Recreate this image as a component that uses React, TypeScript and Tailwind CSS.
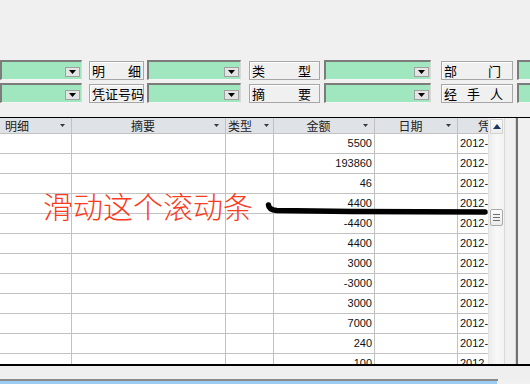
import React from "react";

const GREEN = "bg-[#a0e6bf]";

function DropBtn() {
  return (
    <div className="w-[15px] h-[10px] bg-[#e4e4e4] border border-[#a0a0a0] flex items-center justify-center">
      <svg width="7" height="4" viewBox="0 0 7 4">
        <polygon points="0,0 7,0 3.5,4" fill="#000" />
      </svg>
    </div>
  );
}

function Combo({ w, ml, btn = true }: { w: string; ml: string; btn?: boolean }) {
  return (
    <div
      className={`${w} ${ml} h-[20px] shrink-0 ${GREEN} border-t-2 border-l-2 border-t-[#7c7c7c] border-l-[#7c7c7c] border-r border-b border-r-[#d8d8d8] border-b-[#f4f4f4] flex items-end justify-end pr-[1px] pb-[2px]`}
    >
      {btn && <DropBtn />}
    </div>
  );
}

function Label({ chars, w, ml, gap }: { chars: string[]; w: string; ml: string; gap: string }) {
  return (
    <div
      className={`${w} ${ml} h-[19px] mt-[1px] shrink-0 border border-[#a6a6a6] shadow-[inset_1px_1px_0_#ffffff] flex items-center pl-[2px] ${gap} text-[13px] leading-none text-black font-['Noto_Sans_CJK_SC',sans-serif]`}
    >
      {chars.map((c, i) => (
        <span key={i}>{c}</span>
      ))}
    </div>
  );
}

function SortArrow() {
  return (
    <svg width="5" height="3" viewBox="0 0 5 3" className="shrink-0">
      <polygon points="0,0 5,0 2.5,3" fill="#3a3a3a" />
    </svg>
  );
}

const amounts = ["5500", "193860", "46", "4400", "-4400", "4400", "3000", "-3000", "3000", "7000", "240", "100"];

export default function App() {
  const cjk = "font-['Noto_Sans_CJK_SC',sans-serif]";
  const num = "font-['Liberation_Sans',sans-serif] text-[11px]";
  const cell = "h-[20px] border-r border-b border-[#c2c2c2] bg-white flex items-center overflow-hidden";
  const head = `h-[16px] border-r border-b border-[#c2c2c2] bg-[#dfe3e8] flex items-center text-[12px] leading-none text-[#222] ${cjk} overflow-hidden`;
  return (
    <div className="relative w-[530px] h-[384px] overflow-hidden bg-[#f0f0f0] flex flex-col">
      {/* controls */}
      <div className="pt-[60px] flex flex-col gap-[3px]">
        <div className="flex">
          <Combo w="w-[82px]" ml="ml-0" />
          <Label chars={["明", "细"]} w="w-[55px]" ml="ml-[7px]" gap="gap-[23px]" />
          <Combo w="w-[94px]" ml="ml-[3px]" />
          <Label chars={["类", "型"]} w="w-[71px]" ml="ml-[8px]" gap="gap-[33px]" />
          <Combo w="w-[107px]" ml="ml-[4px]" />
          <Label chars={["部", "门"]} w="w-[72px]" ml="ml-[10px]" gap="gap-[31px]" />
          <Combo w="w-[40px]" ml="ml-[4px]" btn={false} />
        </div>
        <div className="flex">
          <Combo w="w-[82px]" ml="ml-0" />
          <Label chars={["凭", "证", "号", "码"]} w="w-[55px]" ml="ml-[7px]" gap="gap-0" />
          <Combo w="w-[94px]" ml="ml-[3px]" />
          <Label chars={["摘", "要"]} w="w-[71px]" ml="ml-[8px]" gap="gap-[33px]" />
          <Combo w="w-[107px]" ml="ml-[4px]" />
          <Label chars={["经", "手", "人"]} w="w-[72px]" ml="ml-[10px]" gap="gap-[10px]" />
          <Combo w="w-[40px]" ml="ml-[4px]" btn={false} />
        </div>
      </div>

      {/* table area */}
      <div className="mt-[14px] border-t border-black flex h-[247px]">
        <div className="w-[488px] h-full overflow-hidden">
          <div className="grid grid-cols-[72px_154px_48px_101px_83px_70px] w-[528px]">
            <div className={`${head} pl-[5px] pr-[6px] justify-between`}>
              <span>明细</span>
              <SortArrow />
            </div>
            <div className={`${head} pr-[6px]`}>
              <span className="flex-1 text-center">摘要</span>
              <SortArrow />
            </div>
            <div className={`${head} pl-[2px] pr-[4px]`}>
              <span className="flex-1">类型</span>
              <SortArrow />
            </div>
            <div className={`${head} pr-[6px]`}>
              <span className="flex-1 text-center">金额</span>
              <SortArrow />
            </div>
            <div className={`${head} pr-[6px]`}>
              <span className="flex-1 text-center">日期</span>
              <SortArrow />
            </div>
            <div className={`${head} pl-[20px]`}>
              <span>凭证号</span>
            </div>
            {amounts.map((a, i) => (
              <React.Fragment key={i}>
                <div className={cell} />
                <div className={cell} />
                <div className={cell} />
                <div className={`${cell} justify-end pr-[2px] ${num} text-[#111]`}>{a}</div>
                <div className={cell} />
                <div className={`${cell} pl-[2px] ${num} text-[#111] whitespace-nowrap`}>2012-06-15</div>
              </React.Fragment>
            ))}
          </div>
        </div>
        {/* scrollbar */}
        <div className="w-[16px] h-full flex flex-col bg-gradient-to-r from-[#ececec] via-[#f8f8f8] to-[#f3f3f3] border-l border-[#e2e2e2]">
          <div className="h-[15px] mx-[1px] mt-[1px] border border-[#d2d2d2] bg-gradient-to-b from-[#fbfbfb] to-[#ececec] flex items-center justify-center">
            <svg width="8" height="5" viewBox="0 0 8 5">
              <polygon points="0,5 8,5 4,0" fill="#1f3560" />
            </svg>
          </div>
          <div className="mt-[75px] mx-[1px] h-[17px] border border-[#a9a9a9] rounded-[2px] bg-gradient-to-b from-[#fbfbfb] to-[#ebebeb] flex flex-col items-center justify-center gap-[2px]">
            <div className="w-[7px] h-px bg-[#6e6e6e]" />
            <div className="w-[7px] h-px bg-[#6e6e6e]" />
            <div className="w-[7px] h-px bg-[#6e6e6e]" />
          </div>
        </div>
        {/* right panel */}
        <div className="flex-1 h-full flex bg-[#f0f0f0]">
          <div className="w-[11px] border-l border-[#dadada]" />
          <div className="w-px bg-[#d6d6d6]" />
          <div className="w-[2px] bg-[#707070]" />
        </div>
      </div>

      {/* bottom */}
      <div className="h-[2px] bg-black" />
      <div className="h-[13px] bg-[#efefef]" />
      <div className="w-[498px] h-[2px] bg-[#8a8a8a]" />
      <div className="w-[497px] flex-1 bg-[#9ccbf4]" />

      {/* annotation overlay */}
      <div className="absolute left-[43px] top-[190px] text-[30px] leading-none text-[#f83c1e] font-light font-['Noto_Sans_CJK_SC',sans-serif] whitespace-nowrap">
        滑动这个滚动条
      </div>
      <svg className="absolute left-0 top-0 pointer-events-none" width="530" height="384">
        <path
          d="M268.5 205 Q269 210 277 210.5 L352 211.5 L485 212"
          stroke="#000"
          strokeWidth="5.5"
          fill="none"
          strokeLinecap="round"
          style={{ filter: "blur(0.7px)" }}
        />
      </svg>
    </div>
  );
}
